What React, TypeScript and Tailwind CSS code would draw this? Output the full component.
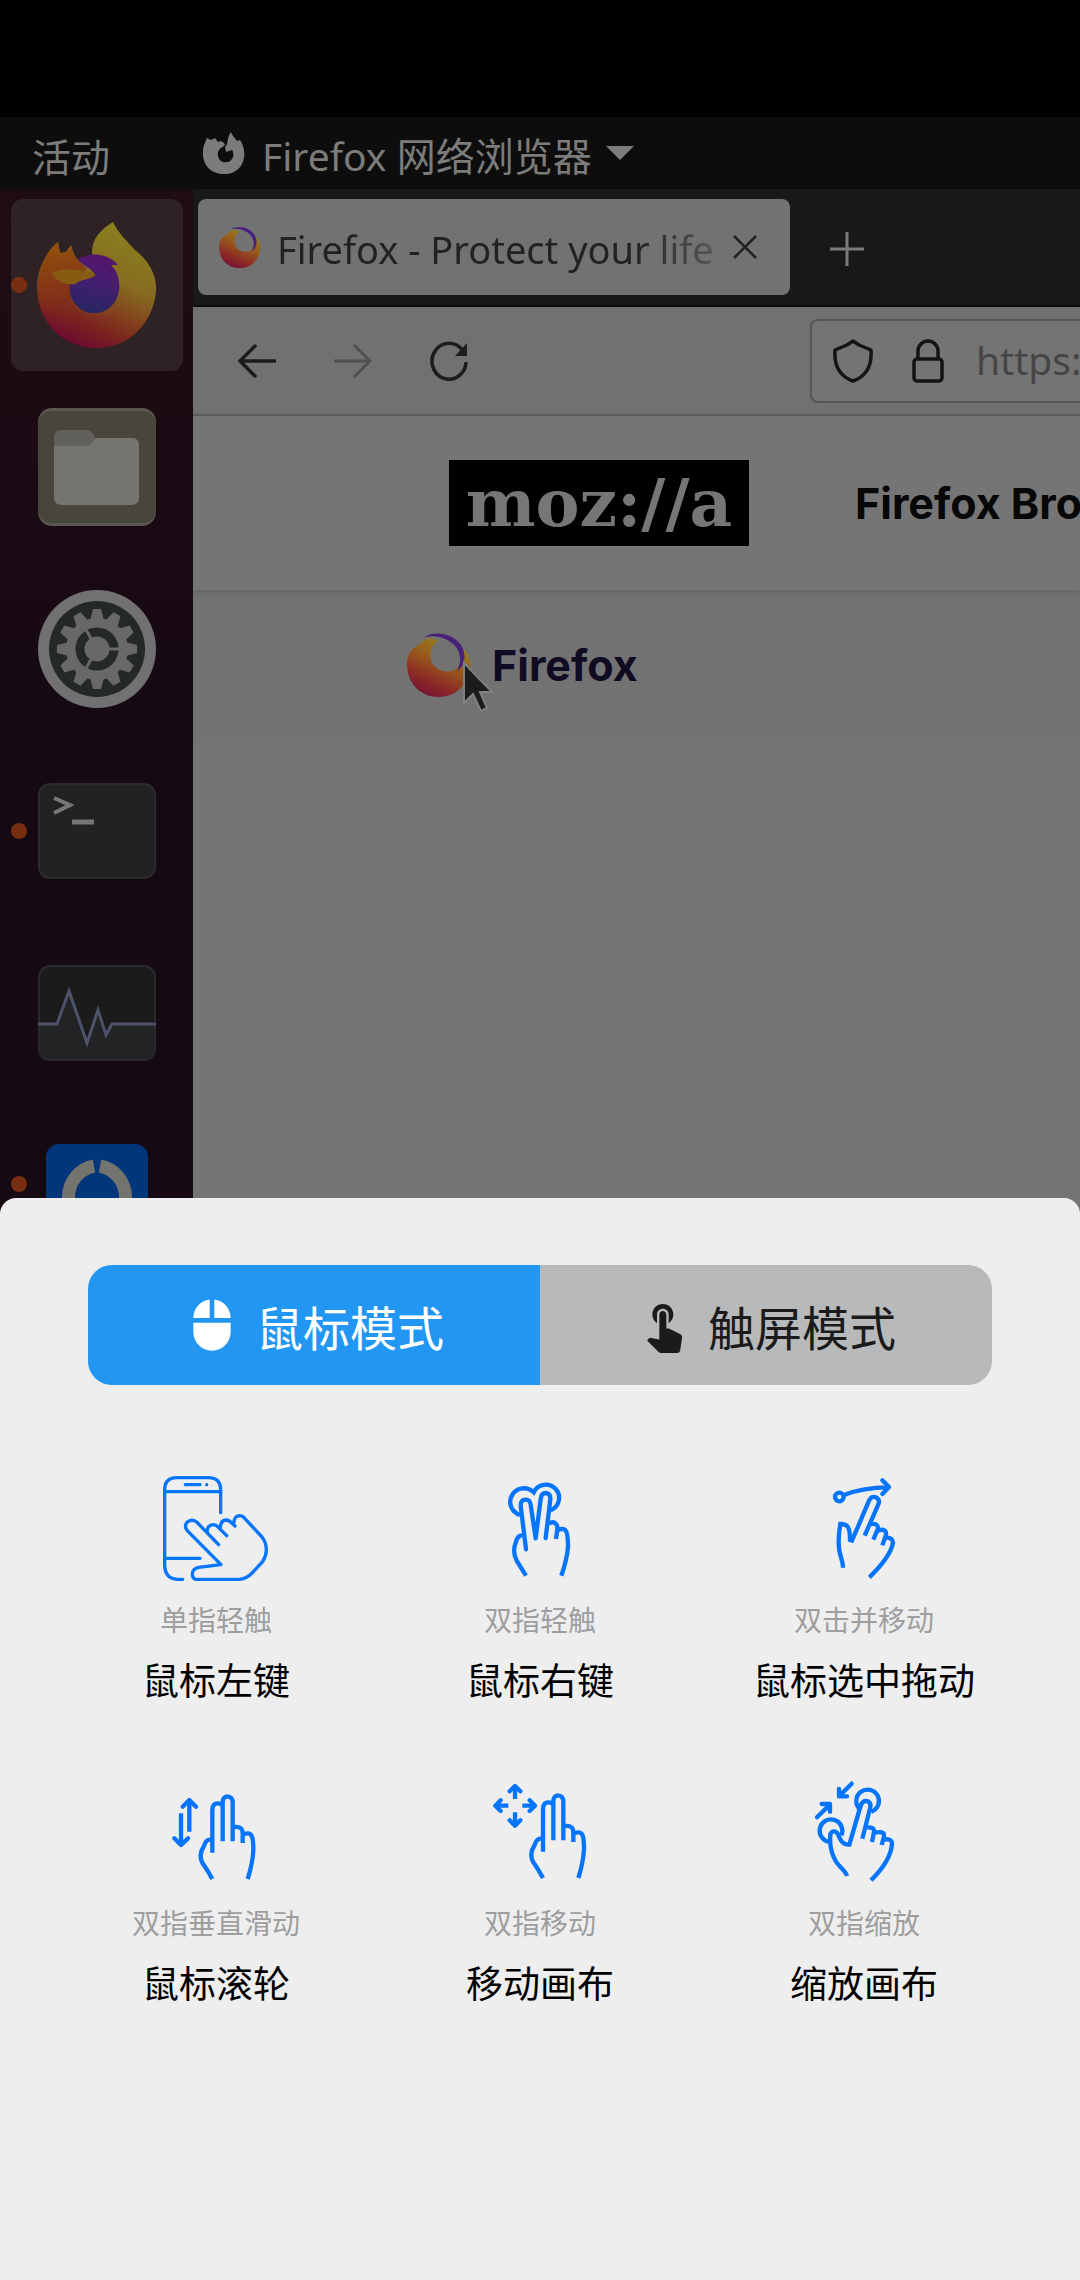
import type { ReactNode } from 'react';
import { MdMouse } from 'react-icons/md';

function FirefoxLogo() {
  return (
    <svg viewBox="37 220 121 128" className="h-32 w-[121px]" aria-hidden="true">
      <defs>
        <linearGradient id="fx-body" x1="0.75" y1="0.05" x2="0.35" y2="1">
          <stop offset="0" stopColor="#8a8020" />
          <stop offset="0.4" stopColor="#866c20" />
          <stop offset="0.64" stopColor="#82421c" />
          <stop offset="0.82" stopColor="#7b2020" />
          <stop offset="1" stopColor="#6c0932" />
        </linearGradient>
        <linearGradient id="fx-left" x1="0.3" y1="0" x2="0.4" y2="1">
          <stop offset="0" stopColor="#90510d" />
          <stop offset="0.55" stopColor="#853416" />
          <stop offset="1" stopColor="#771a24" stopOpacity="0" />
        </linearGradient>
        <linearGradient id="fx-globe" x1="0.6" y1="0" x2="0.4" y2="1">
          <stop offset="0" stopColor="#56146c" />
          <stop offset="0.45" stopColor="#451e70" />
          <stop offset="1" stopColor="#262663" />
        </linearGradient>
      </defs>
      <path fill="url(#fx-body)" d="M114 221C119 232 128 240 136 249C150 260 158 274 157 290C154 324 128 347 98 347C63 347 38 320 38 287C38 268 46 254 59 241L61 252L67 251L72 244C74 252 76 257 81 261L94 258C90 242 99 230 114 221Z" />
      <path fill="url(#fx-left)" d="M59 241L61 252L67 251L72 244C74 252 76 257 81 261L88 268C78 275 68 282 71 295C76 318 100 322 118 312C104 334 58 336 42 305C35 280 42 254 59 241Z" />
      <path fill="url(#fx-globe)" d="M79 258C92 250 110 253 119 264L112 264C120 272 122 284 119 294C113 313 92 317 80 307C72 300 69 290 71 283C78 275 90 280 96 274C92 266 84 266 79 258Z" />
      <path fill="#865c13" d="M53 272C62 267 82 267 97 274C91 279 82 278 76 283C68 284 58 282 53 272Z" />
    </svg>
  );
}

function FirefoxRing({ id, className }: { id: string; className: string }) {
  return (
    <svg viewBox="0 0 64 66" className={className} aria-hidden="true">
      <defs>
        <linearGradient id={id} x1="0.75" y1="0.1" x2="0.3" y2="1">
          <stop offset="0" stopColor="#96811f" />
          <stop offset="0.4" stopColor="#97551c" />
          <stop offset="0.75" stopColor="#8a2726" />
          <stop offset="1" stopColor="#741036" />
        </linearGradient>
      </defs>
      <path fill={`url(#${id})`} d="M9 15C12 13 14 9 20 7C24 5 28 8 31 9C25 13 22 20 24 28C27 38 40 43 49 37C56 32 57 24 56 17C62 22 64 29 63 37C60 54 48 65 32 65C14 65 0 52 0 32C0 25 3 17 9 15Z" />
      <path fill="#47217a" d="M17 5C30 -2 46 2 54 13C60 23 58 34 50 39C55 29 54 19 46 12C38 5 28 3 17 5Z" />
    </svg>
  );
}

function FolderIcon() {
  return (
    <svg viewBox="0 0 118 118" className="size-[118px]" aria-hidden="true">
      <rect width="118" height="118" rx="14" fill="#5a574e" />
      <rect y="3" width="118" height="112" rx="13" fill="#48463a" />
      <path fill="#62605c" d="M16 30Q16 22 23 22H48Q54 22 57 30L60 36V50H16Z" />
      <path fill="#76746f" d="M16 38H50Q54 36 58 30H94Q101 30 101 37V90Q101 97 93 97H24Q16 97 16 90Z" />
    </svg>
  );
}

function GearIcon() {
  const teeth = Array.from({ length: 12 }, (_, i) => i * 30);
  return (
    <svg viewBox="-59 -59 118 118" className="size-[118px]" aria-hidden="true">
      <circle r="59" fill="#717171" />
      <circle r="48" fill="#242826" />
      <g fill="#686868">
        <circle r="31" />
        {teeth.map((a) => (
          <path key={a} transform={`rotate(${a})`} d="M-7 -28L-4 -40H4L7 -28Z" />
        ))}
      </g>
      <circle r="17" fill="none" stroke="#242826" strokeWidth="9" />
      <g stroke="#686868" strokeWidth="3">
        <path d="M0 0H24M0 0L-12 -21M0 0L-12 21" />
      </g>
      <circle r="12" fill="#686868" />
    </svg>
  );
}

function TerminalIcon() {
  return (
    <svg viewBox="0 0 118 96" className="h-24 w-[118px]" aria-hidden="true">
      <rect x="1" y="1" width="116" height="94" rx="11" fill="#222222" stroke="#2c2c2c" strokeWidth="2" />
      <path d="M16 15L32 22L16 30" fill="none" stroke="#767676" strokeWidth="4" />
      <path d="M34 39H56" stroke="#767676" strokeWidth="5" />
    </svg>
  );
}

function MonitorIcon() {
  return (
    <svg viewBox="0 0 118 96" className="h-24 w-[118px]" aria-hidden="true">
      <rect x="1" y="1" width="116" height="94" rx="11" fill="#1b1b1a" stroke="#2a2a2c" strokeWidth="2" />
      <path fill="#212325" d="M2 59H19L31 26L49 78L60 45L69 71L74 59H116V84Q116 94 106 94H12Q2 94 2 84Z" />
      <path d="M0 59H19L31 26L49 78L60 45L68 70L74 59H118" fill="none" stroke="#4e536b" strokeWidth="3" />
    </svg>
  );
}

function RemoteIcon() {
  return (
    <svg viewBox="0 0 102 102" className="size-[102px]" aria-hidden="true">
      <rect width="102" height="102" rx="13" fill="#01367a" />
      <path d="M48 22A31 32 0 0 0 48 85M54 22A31 32 0 0 1 54 85" fill="none" stroke="#74746f" strokeWidth="13" />
    </svg>
  );
}

function Dot() {
  return <span className="size-4 rounded-full bg-[#782e10]" />;
}

function DockItem({ label, dots = 0, active = false, children }: { label: string; dots?: number; active?: boolean; children: ReactNode }) {
  return (
    <button
      type="button"
      aria-label={label}
      className="relative flex h-[182px] w-full items-center justify-center"
    >
      <span className={active ? 'flex size-[172px] items-center justify-center rounded-xl bg-[#2e2224]' : 'flex'}>{children}</span>
      {dots > 0 && (
        <span className="absolute inset-y-0 left-[11px] flex flex-col justify-center gap-1.5">
          {Array.from({ length: dots }, (_, i) => (
            <Dot key={i} />
          ))}
        </span>
      )}
    </button>
  );
}

function Hand() {
  return (
    <path d="M277 278V150Q277 130 293 130Q303 130 307 136M308 244V126Q309 110 322 109Q337 110 338 126V244M344 201Q368 198 368 220V249M372 222C396 214 400 228 400 270Q398 310 383 357M272 239Q258 237 252 258Q234 285 248 310Q262 330 277 357" />
  );
}

function GestureSvg({ viewBox, width = 13, children }: { viewBox: string; width?: number; children: ReactNode }) {
  return (
    <svg viewBox={viewBox} className="size-[120px]" fill="none" stroke="#0675fb" strokeWidth={width} aria-hidden="true">
      {children}
    </svg>
  );
}

const gestures: { hint: string; action: string; icon: ReactNode }[] = [
  {
    hint: '单指轻触',
    action: '鼠标左键',
    icon: (
      <GestureSvg viewBox="110 54 360 360" width={10}>
        <g strokeLinecap="round" strokeLinejoin="round">
          <path d="M304 188V120Q304 83 267 83H172Q136 83 136 120V348Q138 386 174 388H190M136 125H304M136 325H242M198 104H242M262 104H262.1" />
          <path d="M298 284L232 216Q216 205 203 217Q194 229 203 241L305 344L238 352Q220 356 219 372Q219 386 230 388H358Q382 387 400 367L430 335Q441 318 441 300Q441 278 428 261L376 205Q370 197 360 197Q345 198 343 219" />
          <path d="M264 247Q262 225 282 224Q290 224 297 232L322 257M303 233Q304 211 320 210Q328 210 334 216L347 228" />
        </g>
      </GestureSvg>
    ),
  },
  {
    hint: '双指轻触',
    action: '鼠标右键',
    icon: (
      <GestureSvg viewBox="120 54 360 360">
        <path d="M240 195A41 41 0 1 1 281 127A40 40 0 1 1 332 181" />
        <path strokeLinejoin="round" strokeLinecap="round" d="M258 298L242 167Q242 149 257 149Q270 149 272 164L287 265L302 147Q304 129 317 129Q332 130 331 148L317 264" />
        <path d="M327 222Q336 213 346 220Q354 226 352 238L348 267M354 240Q366 234 376 240Q384 248 384 290Q382 325 364 377M248 256Q233 255 228 275Q216 305 230 332L258 377" />
      </GestureSvg>
    ),
  },
  {
    hint: '双击并移动',
    action: '鼠标选中拖动',
    icon: (
      <GestureSvg viewBox="192 54 360 360">
        <circle cx="298" cy="141" r="13" />
        <path d="M312 135Q370 112 444 112" />
        <path strokeLinecap="round" strokeLinejoin="round" d="M427 91L447 111L427 132" />
        <path d="M309 353Q309 342 303 322Q290 285 301 222C324 222 330 232 330 270L336 272L388 150Q395 137 408 142Q421 149 415 163L374 257M393 222Q417 219 413 238L400 269M412 242Q440 233 438 254L427 286M436 262Q458 262 459 278Q452 320 388 382" />
      </GestureSvg>
    ),
  },
  {
    hint: '双指垂直滑动',
    action: '鼠标滚轮',
    icon: (
      <GestureSvg viewBox="108 33 360 360">
        <path d="M208 215V122M183 160V253" />
        <path strokeLinecap="round" strokeLinejoin="round" d="M188 140L208 120L228 140M163 235L183 255L204 235" />
        <Hand />
      </GestureSvg>
    ),
  },
  {
    hint: '双指移动',
    action: '移动画布',
    icon: (
      <GestureSvg viewBox="120 33 360 360">
        <path d="M225 117V80M225 157V196M205 137H168M247 137H284" />
        <path strokeLinecap="round" strokeLinejoin="round" d="M209 94L225 78L241 94M209 181L225 197L241 181M182 121L166 137L182 153M269 121L285 137L269 153" />
        <g transform="translate(32 -3)">
          <Hand />
        </g>
      </GestureSvg>
    ),
  },
  {
    hint: '双指缩放',
    action: '缩放画布',
    icon: (
      <GestureSvg viewBox="102 33 360 360">
        <path strokeLinecap="round" strokeLinejoin="round" d="M245 71L208 108M207 87V109H231M141 172L179 134M155 132H180V155" />
        <path d="M270 148A34 34 0 1 1 304 155M180 246A34 34 0 1 1 214 226" />
        <path d="M231 348Q228 338 212 322Q176 285 181 222Q190 208 202 219L212 240Q222 255 238 254L273 134Q280 120 294 124Q304 130 301 142L277 236M292 203Q314 200 312 216L306 246M311 219Q344 210 342 230L335 255M340 237Q366 236 366 250Q364 300 303 361" />
      </GestureSvg>
    ),
  },
];

export default function App() {
  return (
    <div className="flex min-h-screen flex-col overflow-hidden bg-black font-['Noto_Sans','Noto_Sans_CJK_SC',sans-serif]">
      <div className="pt-[117px]">
        <header className="flex h-[72px] items-center bg-[#0d0d0d] text-[39px] leading-none text-[#7c7c7a]">
          <button type="button" className="ml-8 pt-1 font-['Noto_Sans_CJK_SC',sans-serif]">活动</button>
          <button type="button" className="ml-[93px] flex items-center whitespace-nowrap">
            <svg viewBox="0 0 42 44" className="h-11 w-[42px]" aria-hidden="true">
              <path fill="#7c7c7a" d="M1 14L4 7L8 9L12 7L15 11C18 9 21 11 22 14L18 17C13 20 14 29 20 31C28 33 33 25 29 19L23 21L22 16C26 13 23 8 28 1C30 6 33 8 34 10L37 9C46 22 41 43 21 43C3 43 -3 27 1 14Z" />
            </svg>
            <span className="ml-[17px] pt-1">Firefox 网络浏览器</span>
            <svg viewBox="0 0 28 14" className="ml-3.5 h-3.5 w-7" aria-hidden="true">
              <path fill="#7c7c7a" d="M0 0H28L14 14Z" />
            </svg>
          </button>
        </header>

        <div className="flex">
          <nav aria-label="Dock" className="w-[193px] shrink-0 bg-linear-to-b from-[#200c13] via-[#160913] via-50% to-[#150a12] pt-[5px]">
            <DockItem label="Firefox" dots={1} active><FirefoxLogo /></DockItem>
            <DockItem label="Files"><FolderIcon /></DockItem>
            <DockItem label="Settings"><GearIcon /></DockItem>
            <DockItem label="Terminal" dots={1}><TerminalIcon /></DockItem>
            <DockItem label="System Monitor"><MonitorIcon /></DockItem>
            <DockItem label="Remote" dots={2}><RemoteIcon /></DockItem>
          </nav>

          <main className="flex min-w-0 flex-1 flex-col overflow-hidden bg-[#747474]">
            <div className="flex h-[118px] items-center border-b-2 border-[#0c0c0c] bg-[#181817] pl-[5px]">
              <div className="flex h-24 w-[592px] shrink-0 items-center rounded-lg bg-[#727272] pl-[21px] text-[#222222]">
                <FirefoxRing id="ring-tab" className="h-[43px] w-[42px] shrink-0" />
                <span className="ml-4 w-[444px] overflow-hidden pt-1 text-[38px] leading-[48px] whitespace-nowrap [mask-image:linear-gradient(to_right,black_80%,transparent_108%)]">
                  Firefox - Protect your life
                </span>
                <button type="button" aria-label="Close tab" className="ml-3">
                  <svg viewBox="0 0 24 24" className="size-6" fill="none" stroke="#222222" strokeWidth="2.5" aria-hidden="true">
                    <path d="M1 1L23 23M23 1L1 23" />
                  </svg>
                </button>
              </div>
              <button type="button" aria-label="New tab" className="ml-10 pt-1">
                <svg viewBox="0 0 34 34" className="size-[34px]" stroke="#7a7a7a" strokeWidth="3" aria-hidden="true">
                  <path d="M17 0V34M0 17H34" />
                </svg>
              </button>
            </div>

            <div className="flex h-[109px] items-center border-b-2 border-[#575757] bg-[#717171] pl-[45px]">
              <button type="button" aria-label="Back">
                <svg viewBox="0 0 38 34" className="h-[34px] w-[38px]" fill="none" stroke="#1c1c1c" strokeWidth="3.5" strokeLinecap="round" aria-hidden="true">
                  <path d="M17 2L2 17L17 32M2 17H37" />
                </svg>
              </button>
              <button type="button" aria-label="Forward" className="ml-[58px]">
                <svg viewBox="0 0 38 34" className="h-[34px] w-[38px]" fill="none" stroke="#4f4f4f" strokeWidth="3" strokeLinecap="round" aria-hidden="true">
                  <path d="M21 2L36 17L21 32M36 17H1" />
                </svg>
              </button>
              <button type="button" aria-label="Reload" className="ml-[58px]">
                <svg viewBox="0 0 38 40" className="h-10 w-[38px]" fill="none" stroke="#1c1c1c" strokeWidth="3.5" aria-hidden="true">
                  <path d="M33 10A17 18 0 1 0 36 21" />
                  <path d="M37 2V15H25Z" fill="#1c1c1c" stroke="none" />
                </svg>
              </button>
              <label className="ml-[342px] flex h-[84px] min-w-0 flex-1 items-center overflow-hidden rounded-l-lg border-2 border-r-0 border-[#565656] bg-[#747474] pl-[21px]">
                <svg viewBox="0 0 40 44" className="h-11 w-10 shrink-0" fill="none" stroke="#141414" strokeWidth="3.5" strokeLinejoin="round" aria-hidden="true">
                  <path d="M20 2L26 6L38 11C39 25 34 37 20 42C6 37 1 25 2 11L14 6Z" />
                </svg>
                <svg viewBox="0 0 32 44" className="ml-[39px] h-11 w-8 shrink-0" fill="none" stroke="#141414" strokeWidth="3.5" aria-hidden="true">
                  <rect x="2" y="20" width="28" height="22" rx="3" />
                  <path d="M6 20V12A10 10 0 0 1 26 12V20" />
                </svg>
                <input aria-label="Address" defaultValue="https:" className="ml-8 w-[120px] shrink-0 bg-transparent text-[39px] text-[#454545] outline-none" />
              </label>
            </div>

            <div className="relative flex h-[174px] items-center bg-[#757575] pl-64 shadow-[0_1px_6px_1px_#616464]">
              <span className="flex h-[86px] w-[300px] shrink-0 items-center justify-center bg-black font-['DejaVu_Serif',serif] text-[66px] leading-none font-bold text-[#767676]">
                moz://a
              </span>
              <a href="#browsers" className="ml-[106px] font-['Inter',sans-serif] text-[43px] font-bold whitespace-nowrap text-[#070707]">
                Firefox Bro
              </a>
            </div>

            <div className="flex h-[149px] items-center bg-[#727272] pl-[214px]">
              <span className="relative flex shrink-0">
                <FirefoxRing id="ring-page" className="h-[66px] w-16" />
                <svg viewBox="0 0 34 54" className="absolute top-[29px] left-[55px] h-[54px] w-[34px]" aria-hidden="true">
                  <path d="M2 2V42L11 33L19 50L25 47L18 31H30Z" fill="#1c1c1c" stroke="#808080" strokeWidth="2" />
                </svg>
              </span>
              <a href="#firefox" className="ml-[21px] pt-0.5 font-['Inter',sans-serif] text-[43px] font-bold text-[#0f0b22]">Firefox</a>
            </div>
          </main>
        </div>
      </div>

      <section className="relative -mt-[88px] flex-1 rounded-t-2xl bg-[#eeeeee] pt-[67px] font-['Noto_Sans_CJK_SC',sans-serif]">
        <div className="mx-[88px] flex h-[120px] overflow-hidden rounded-3xl text-[47px] leading-none">
          <button type="button" aria-pressed="true" className="flex flex-1 items-center justify-center gap-4 bg-[#2196f3] text-white">
            <MdMouse className="size-14" aria-hidden="true" />
            <span>鼠标模式</span>
          </button>
          <button type="button" aria-pressed="false" className="flex flex-1 items-center justify-center gap-4 bg-[#b8b9bb] text-[#1b1b1b]">
            <svg viewBox="0 0 24 24" className="size-14" fill="currentColor" aria-hidden="true">
              <path d="M9 11.24V7.5C9 6.12 10.12 5 11.5 5S14 6.12 14 7.5v3.74c1.21-.81 2-2.18 2-3.74C16 5.01 13.99 3 11.5 3S7 5.01 7 7.5c0 1.56.79 2.93 2 3.74zm9.84 4.63l-4.54-2.26c-.17-.07-.35-.11-.54-.11H13v-6c0-.83-.67-1.5-1.5-1.5S10 6.67 10 7.5v10.74l-3.43-.72c-.08-.01-.15-.03-.24-.03-.31 0-.59.13-.79.33l-.79.8 4.94 4.94c.27.27.65.44 1.06.44h6.79c.75 0 1.33-.55 1.44-1.28l.75-5.27c.01-.07.02-.14.02-.2 0-.62-.38-1.16-.91-1.38z" />
            </svg>
            <span>触屏模式</span>
          </button>
        </div>

        <ul className="mx-[54px] mt-[83px] grid grid-cols-3 gap-y-[68px]">
          {gestures.map((g) => (
            <li key={g.action} className="flex flex-col items-center whitespace-nowrap">
              {g.icon}
              <p className="mt-[11px] text-[28px] leading-10 text-[#9e9e9e]">{g.hint}</p>
              <p className="mt-4 text-[37px] leading-[48px] text-black">{g.action}</p>
            </li>
          ))}
        </ul>
      </section>
    </div>
  );
}
